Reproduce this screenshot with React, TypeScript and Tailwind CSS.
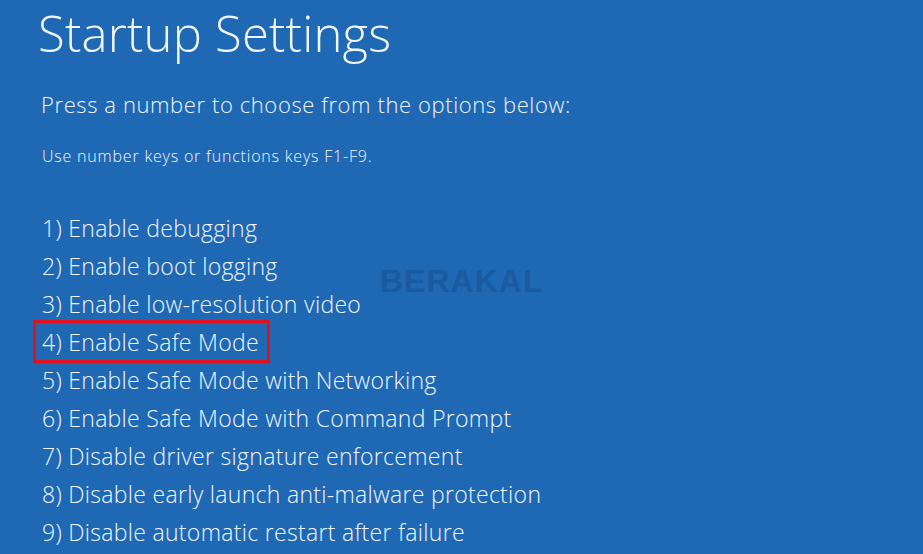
const options = [
  "1) Enable debugging",
  "2) Enable boot logging",
  "3) Enable low-resolution video",
  "4) Enable Safe Mode",
  "5) Enable Safe Mode with Networking",
  "6) Enable Safe Mode with Command Prompt",
  "7) Disable driver signature enforcement",
  "8) Disable early launch anti-malware protection",
  "9) Disable automatic restart after failure",
];

export default function App() {
  return (
    <div className="relative w-[923px] h-[554px] overflow-hidden bg-[#1f68b3] text-[#f2f6fb] font-['Open_Sans',sans-serif]">
      <div className="flex flex-col pl-[38px]">
        <h1 className="mt-[1px] text-[49px] font-light leading-[64px] tracking-[0.2px]">Startup Settings</h1>
        <p className="mt-[24px] ml-[3px] text-[22px] font-light leading-[30px] tracking-[0.6px]">
          Press a number to choose from the options below:
        </p>
        <p className="mt-[27px] ml-[4px] text-[16px] font-light leading-[20px] tracking-[0.8px]">
          Use number keys or functions keys F1-F9.
        </p>
        <ul className="mt-[43px] flex flex-col">
          {options.map((o, i) =>
            i === 3 ? (
              <li
                key={o}
                className="-ml-[5px] w-[237px] h-[43px] -mt-[3px] -mb-[2px] border-[3px] border-[#e0101c] pl-[6px] text-[23px] font-light leading-[38px] tracking-[0.3px]"
              >
                {o}
              </li>
            ) : (
              <li key={o} className="ml-[4px] text-[23px] font-light leading-[38px] tracking-[0.3px]">
                {o}
              </li>
            )
          )}
        </ul>
      </div>
      <div className="absolute left-[380px] top-[257px] text-[32px] font-bold tracking-[1px] text-[#1a5a9f] font-['Liberation_Sans',sans-serif] select-none">
        BERAKAL
      </div>
    </div>
  );
}
